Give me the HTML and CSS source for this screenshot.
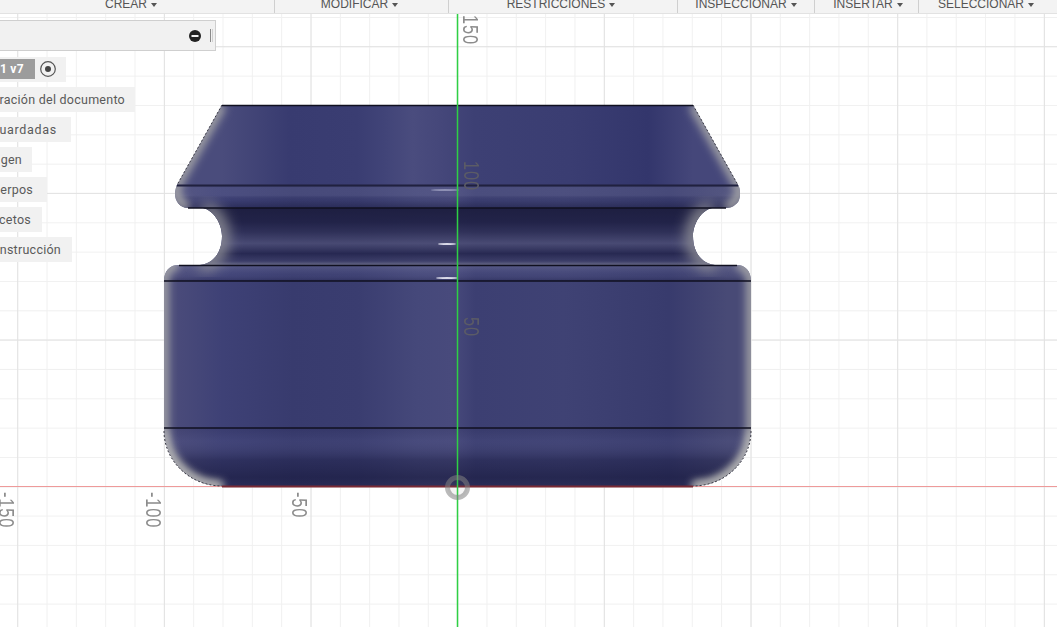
FILE: index.html
```html
<!DOCTYPE html>
<html lang="es">
<head>
<meta charset="utf-8">
<title>Fusion</title>
<link rel="stylesheet" href="styles.css">
</head>
<body>
<div class="app">
  <nav class="toolbar">
    <div class="tool tool-create"><span>CREAR</span><i class="caret"></i></div>
    <div class="tool tool-modify"><span>MODIFICAR</span><i class="caret"></i></div>
    <div class="tool tool-constrain"><span>RESTRICCIONES</span><i class="caret"></i></div>
    <div class="tool tool-inspect"><span>INSPECCIONAR</span><i class="caret"></i></div>
    <div class="tool tool-insert"><span>INSERTAR</span><i class="caret"></i></div>
    <div class="tool tool-select"><span>SELECCIONAR</span><i class="caret"></i></div>
  </nav>
  <main class="viewport">
    <svg class="scene" viewBox="0 13 1057 614" width="1057" height="614" xmlns="http://www.w3.org/2000/svg">
      <defs>
        <pattern id="minor" patternUnits="userSpaceOnUse" x="17.2" y="16" width="29.33" height="29.33">
          <path d="M0.5 0V29.33M0 0.5H29.33" class="grid-minor"/>
        </pattern>
        <pattern id="major" patternUnits="userSpaceOnUse" x="17.2" y="45.2" width="146.67" height="146.67">
          <path d="M0.5 0V146.67M0 0.5H146.67" class="grid-major"/>
        </pattern>
        <linearGradient id="cone-side" gradientUnits="userSpaceOnUse" x1="177" y1="0" x2="738" y2="0">
          <stop offset="0.08" stop-color="#4a4c7c"/>
          <stop offset="0.2" stop-color="#383b70"/>
          <stop offset="0.32" stop-color="#3a3d72"/>
          <stop offset="0.37" stop-color="#414478"/>
          <stop offset="0.42" stop-color="#4a4c7e"/>
          <stop offset="0.47" stop-color="#45477a"/>
          <stop offset="0.53" stop-color="#3d4074"/>
          <stop offset="0.7" stop-color="#3a3d72"/>
          <stop offset="0.84" stop-color="#33366c"/>
          <stop offset="0.92" stop-color="#45477a"/>
        </linearGradient>
        <linearGradient id="side" gradientUnits="userSpaceOnUse" x1="164" y1="0" x2="751" y2="0">
          <stop offset="0.02" stop-color="#4a4b7a"/>
          <stop offset="0.1" stop-color="#3e4176"/>
          <stop offset="0.22" stop-color="#383b6e"/>
          <stop offset="0.33" stop-color="#3a3d70"/>
          <stop offset="0.43" stop-color="#45487a"/>
          <stop offset="0.49" stop-color="#484a7c"/>
          <stop offset="0.53" stop-color="#3c3f72"/>
          <stop offset="0.68" stop-color="#3f4274"/>
          <stop offset="0.86" stop-color="#383b6d"/>
          <stop offset="0.96" stop-color="#484a76"/>
        </linearGradient>
        <linearGradient id="lip-upper" x1="0" y1="0" x2="0" y2="1">
          <stop offset="0" stop-color="#16173a" stop-opacity="0.5"/>
          <stop offset="0.12" stop-color="#7d7fa6" stop-opacity="0.22"/>
          <stop offset="0.45" stop-color="#8a8cb0" stop-opacity="0.18"/>
          <stop offset="0.65" stop-color="#16173a" stop-opacity="0.05"/>
          <stop offset="1" stop-color="#16173a" stop-opacity="0.45"/>
        </linearGradient>
        <linearGradient id="neck" x1="0" y1="0" x2="0" y2="1">
          <stop offset="0" stop-color="#1c1d3e" stop-opacity="0.95"/>
          <stop offset="0.25" stop-color="#1f2044" stop-opacity="0.9"/>
          <stop offset="0.42" stop-color="#2c2d52" stop-opacity="0.8"/>
          <stop offset="0.62" stop-color="#4d4e74" stop-opacity="0.75"/>
          <stop offset="0.8" stop-color="#22234a" stop-opacity="0.8"/>
          <stop offset="0.93" stop-color="#3a3b62" stop-opacity="0.7"/>
          <stop offset="1" stop-color="#77788f" stop-opacity="0.75"/>
        </linearGradient>
        <linearGradient id="lip-lower" x1="0" y1="0" x2="0" y2="1">
          <stop offset="0" stop-color="#9a9cbc" stop-opacity="0.3"/>
          <stop offset="0.6" stop-color="#6d6f9a" stop-opacity="0.12"/>
          <stop offset="1" stop-color="#16173a" stop-opacity="0.3"/>
        </linearGradient>
        <linearGradient id="base" x1="0" y1="0" x2="0" y2="1">
          <stop offset="0" stop-color="#16173a" stop-opacity="0.12"/>
          <stop offset="0.22" stop-color="#5d5f8e" stop-opacity="0.12"/>
          <stop offset="0.55" stop-color="#16173a" stop-opacity="0.38"/>
          <stop offset="0.85" stop-color="#16173a" stop-opacity="0.62"/>
          <stop offset="1" stop-color="#16173a" stop-opacity="0.5"/>
        </linearGradient>
        <clipPath id="body-clip">
          <path d="M222 104H693L738 184C741 188 741 200 736 203C733 206 729 207 726 207H712C702 209 693 222 693 235C693 250 700 262 715 264H737C745 264 751 270 751 280V427C751 460 725 485 693 485H222C190 485 164 460 164 427V280C164 270 170 264 178 264H200C215 262 222 250 222 235C222 222 213 209 203 207H188C180 207 175 200 175 193C175 190 176 186 177 184Z"/>
        </clipPath>
        <filter id="soft" x="-10%" y="-10%" width="120%" height="120%"><feGaussianBlur stdDeviation="4"/></filter>
        <filter id="softer" x="-20%" y="-20%" width="140%" height="140%"><feGaussianBlur stdDeviation="7"/></filter>
      </defs>

      <rect x="0" y="13" width="1057" height="614" fill="url(#minor)"/>
      <rect x="0" y="13" width="1057" height="614" fill="url(#major)"/>

      <line class="axis-x" x1="0" y1="485.5" x2="1057" y2="485.5"/>

      <g clip-path="url(#body-clip)">
        <rect x="164" y="104" width="587" height="81" fill="url(#cone-side)"/>
        <rect x="164" y="184" width="587" height="301" fill="url(#side)"/>
        <rect x="164" y="184" width="587" height="23" fill="url(#lip-upper)"/>
        <rect x="164" y="207" width="587" height="57" fill="url(#neck)"/>
        <rect x="164" y="264" width="587" height="16" fill="url(#lip-lower)"/>
        <rect x="164" y="427" width="587" height="58" fill="url(#base)"/>
        <path class="rim" filter="url(#soft)" d="M222 104L177 184C175 190 175 200 188 207M693 104L738 184C741 188 741 200 726 207M178 264C170 264 164 270 164 280V427C164 460 190 485 222 485M737 264C745 264 751 270 751 280V427C751 460 725 485 693 485"/>
        <path class="rim-wide" filter="url(#softer)" d="M203 207C213 209 222 222 222 235C222 250 215 262 200 264M712 207C702 209 693 222 693 235C693 250 700 262 715 264"/>
        <path class="rim-corner" filter="url(#soft)" d="M164 430C164 460 190 485 222 485M751 430C751 460 725 485 693 485"/>
        <ellipse class="glint" cx="447" cy="243" rx="9" ry="1"/>
        <ellipse class="glint" cx="447" cy="277" rx="11" ry="1"/>
        <ellipse class="glint-soft" cx="445" cy="189" rx="14" ry="1"/>
      </g>

      <path class="edge-dotted" d="M222 104L177 184M693 104L738 184M164 430C164 460 190 485 222 485M751 430C751 460 725 485 693 485"/>
      <path class="edge" d="M222 104.5H693M188 207H726M179 264.5H737M164 280H751M164 427H751"/>
      <path class="edge-soft" d="M177 184.5H738"/>
      <path class="edge-base" d="M222 485.5H693"/>

      <line class="axis-y" x1="457.5" y1="13" x2="457.5" y2="627"/>
      <circle class="origin" cx="457.5" cy="486.5" r="10"/>

      <text class="dim" transform="translate(463 14) rotate(90) scale(1.02 1.36)">150</text>
      <text class="dim dim-over" transform="translate(464 160) rotate(90) scale(1.02 1.36)">100</text>
      <text class="dim dim-over" transform="translate(464 316) rotate(90) scale(1.02 1.36)">50</text>
      <text class="dim" transform="translate(292 491) rotate(90) scale(1.02 1.36)">-50</text>
      <text class="dim" transform="translate(146 491) rotate(90) scale(1.02 1.36)">-100</text>
      <text class="dim" transform="translate(-1 491) rotate(90) scale(1.02 1.36)">-150</text>
    </svg>

    <div class="searchbar">
      <svg class="collapse" viewBox="0 0 12 12" width="12" height="12"><circle cx="6" cy="6" r="6"/><rect x="2.5" y="5" width="7" height="2"/></svg>
      <span class="grip"></span>
    </div>

    <div class="tree">
      <div class="tree-row tree-head">
        <span class="version">1 v7</span>
        <svg class="radio" viewBox="0 0 16 16" width="16" height="16"><circle class="radio-ring" cx="8" cy="8" r="7.3"/><circle class="radio-dot" cx="8" cy="8" r="3"/></svg>
      </div>
      <div class="tree-row row-doc">ración del documento</div>
      <div class="tree-row row-saved">uardadas</div>
      <div class="tree-row row-origin">gen</div>
      <div class="tree-row row-bodies">erpos</div>
      <div class="tree-row row-sketch">cetos</div>
      <div class="tree-row row-constr">nstrucción</div>
    </div>
  </main>
</div>
</body>
</html>
```
FILE: styles.css
```css
* { box-sizing: border-box; }
html, body { margin: 0; height: 100%; overflow: hidden; background: #fff; }
body { font-family: "Liberation Sans", Arial, sans-serif; }

.app { display: flex; flex-direction: column; width: 1057px; height: 627px; }

.toolbar {
  display: flex;
  flex: none;
  height: 14px;
  background: #f3f3f3;
  border-bottom: 1px solid #e2e2e2;
  overflow: hidden;
}
.tool {
  display: flex;
  justify-content: center;
  align-items: flex-end;
  gap: 4px;
  height: 13px;
  border-right: 1px solid #cfcfcf;
  color: #555;
  font-size: 12px;
  line-height: 13px;
  white-space: nowrap;
}
.tool span { display: block; margin-bottom: 2.5px; }
.caret {
  display: block;
  width: 0;
  height: 0;
  margin-bottom: 6px;
  border-left: 3px solid transparent;
  border-right: 3px solid transparent;
  border-top: 4px solid #555;
}
.tool-create { width: 275px; padding-right: 12px; }
.tool-modify { width: 174px; padding-right: 4px; }
.tool-constrain { width: 229px; padding-right: 4px; }
.tool-inspect { width: 137px; }
.tool-insert { width: 104px; padding-left: 3px; }
.tool-select { width: 138px; border-right: 0; padding-right: 4px; }

.viewport { position: relative; flex: 1; overflow: hidden; }
.scene { display: block; filter: blur(0.4px); }

.grid-minor { fill: none; stroke: #f0f0f0; stroke-width: 1; }
.grid-major { fill: none; stroke: #e2e2e2; stroke-width: 1; }
.axis-x { stroke: #ee9a9a; stroke-width: 1.2; }
.axis-y { stroke: #2fd044; stroke-width: 1.5; }
.rim { fill: none; stroke: #a9a9a9; stroke-width: 9; }
.rim-wide { fill: none; stroke: #8f8f96; stroke-width: 14; }
.rim-corner { fill: none; stroke: #bdbdbd; stroke-width: 6; }
.glint { fill: #d9d9e8; }
.glint-soft { fill: #8e90b4; }
.edge { fill: none; stroke: #101020; stroke-width: 1.5; }
.edge-soft { fill: none; stroke: #20213f; stroke-width: 2; }
.edge-base { fill: none; stroke: #7a2a35; stroke-width: 1.8; }
.edge-dotted { fill: none; stroke: #3a3a44; stroke-width: 1; stroke-dasharray: 2 2; }
.origin { fill: rgba(120, 120, 120, 0.08); stroke: rgba(130, 130, 130, 0.55); stroke-width: 5; }
.dim { font-family: "Liberation Sans", Arial, sans-serif; font-size: 16px; letter-spacing: 0.9px; fill: #8c8c8c; }
.dim-over { fill: #5b5b66; }

.searchbar {
  position: absolute;
  left: -2px;
  top: 6px;
  width: 218px;
  height: 31px;
  display: flex;
  align-items: center;
  justify-content: flex-end;
  gap: 9px;
  padding-right: 2px;
  background: #f1f1f1;
  border: 1px solid #cfcfcf;
}
.collapse { fill: #222; }
.collapse rect { fill: #f1f1f1; }
.grip { width: 3px; height: 13px; border-left: 1px solid #8a8a8a; border-right: 1px solid #d0d0d0; }

.tree {
  position: absolute;
  left: 0;
  top: 43px;
  display: flex;
  flex-direction: column;
  align-items: flex-start;
  gap: 5.4px;
  font-family: Roboto, "Liberation Sans", sans-serif;
  font-size: 12.5px;
  color: #5a5a5a;
}
.tree-row {
  display: flex;
  align-items: center;
  justify-content: flex-end;
  height: 24.6px;
  padding-right: 10px;
  background: #f1f1f1;
  white-space: nowrap;
  letter-spacing: 0.25px;
}
.tree-head { width: 66px; gap: 5px; justify-content: flex-start; padding-right: 0; }
.version {
  display: block;
  width: 35px;
  height: 20px;
  line-height: 20px;
  background: #9c9c9c;
  color: #fff;
  font-weight: 700;
  font-size: 12px;
}
.radio-ring { fill: none; stroke: #555; stroke-width: 1.2; }
.radio-dot { fill: #444; }
.row-doc { width: 135px; }
.row-saved { width: 71px; padding-right: 14px; letter-spacing: 0.7px; }
.row-origin { width: 32px; }
.row-bodies { width: 47px; padding-right: 14px; }
.row-sketch { width: 42px; padding-right: 11px; }
.row-constr { width: 72px; padding-right: 11px; }
```
